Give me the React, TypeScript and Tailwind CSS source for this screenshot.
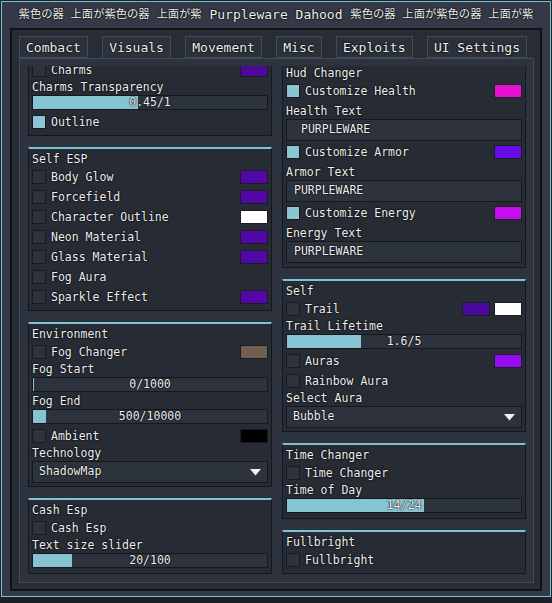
import type { ReactNode } from "react"

const tabs = ["Combact", "Visuals", "Movement", "Misc", "Exploits", "UI Settings"]

function Section({ children }: { children: ReactNode }) {
  return (
    <div className="shrink-0 border border-[#14171c] border-t-2 border-t-[#7ec3d4] bg-[#262b34] p-[3px]">
      {children}
    </div>
  )
}

function Label({ children }: { children?: ReactNode }) {
  return <div className="h-[15px] leading-[15px]">{children}</div>
}

function Toggle({ label, checked, swatches }: { label: string; checked?: boolean; swatches?: string[] }) {
  return (
    <div className="flex h-[20px] items-center">
      <div
        className={`h-[14px] w-[14px] shrink-0 border border-[#171a20] ${checked ? "bg-[#8bc5d4]" : "bg-[#2d333d]"}`}
      />
      <span className="ml-[5px] flex-1 leading-[14px]">{label}</span>
      {swatches?.map((c, i) => (
        <div key={i} className={`ml-[4px] h-[14px] w-[28px] shrink-0 border border-[#1a1d24] ${c}`} />
      ))}
    </div>
  )
}

function Slider({ text, pct }: { text: string; pct: string }) {
  return (
    <div className="relative mb-[2px] h-[15px] border border-[#15181d] bg-[#2d333d]">
      <div className="h-full bg-[#86c3d3]" style={{ width: pct }} />
      <div className="absolute inset-0 flex items-center justify-center leading-none">{text}</div>
    </div>
  )
}

function TextField({ label, indent }: { label: string; indent?: boolean }) {
  return (
    <>
      <div className="h-[18px] pt-[3px] leading-[15px]">{label}</div>
      <div
        className={`mb-px flex h-[22px] items-center border border-[#15181d] bg-[#2d333d] ${indent ? "pl-[14px]" : "pl-[7px]"}`}
      >
        PURPLEWARE
      </div>
    </>
  )
}

function Dropdown({ value }: { value: string }) {
  return (
    <div className="flex h-[22px] items-center justify-between border border-[#15181d] bg-[#2d333d] pl-[6px] pr-[6px]">
      <span>{value}</span>
      <svg width="11" height="7" viewBox="0 0 11 7">
        <path d="M0 0H11L5.5 6.5Z" fill="#f2f2f2" />
      </svg>
    </div>
  )
}

export default function App() {
  return (
    <div className="h-[603px] w-[552px] bg-[#1d2026] p-px font-['DejaVu_Sans_Mono','Noto_Sans_CJK_JP',monospace] text-[11.5px] text-[#f0f0f0] [text-shadow:0_0_1px_#000,0_0_2px_#000]">
      <div className="w-[550px] border border-[#7cc1d3] bg-[#333946] px-[8px] pb-[5px]">
        {/* title */}
        <div className="flex h-[26px] items-center justify-center whitespace-pre text-[13px]">
          <span className="text-[11.3px]">紫色の器 上面が紫色の器 上面が紫</span>
          <span> Purpleware Dahood </span>
          <span className="text-[11.3px]">紫色の器 上面が紫色の器 上面が紫</span>
        </div>

        <div className="h-[563px] border-2 border-[#101216] bg-[#272c35] pl-[7px] pr-[6px] pt-[6px]">
          {/* tabs */}
          <div className="flex h-[22px] w-[508px] justify-between whitespace-nowrap text-[13px] leading-none">
            {tabs.map((t) => (
              <div
                key={t}
                className={`flex items-center border border-[#434a58] px-[6px] pt-px ${t === "Visuals" ? "border-b-[#2d333e] bg-[#2d333e]" : "bg-[#2b313b]"}`}
              >
                {t}
              </div>
            ))}
          </div>

          {/* content panel */}
          <div className="flex h-[525px] gap-[10px] border border-[#434a58] bg-[#2d333e] pb-[8px] pl-[8px] pt-[7px]">
            {/* left column (scrolled to bottom) */}
            <div className="flex h-[508px] w-[244px] flex-col justify-end gap-[11px] overflow-hidden">
              <Section>
                <Label />
                <Toggle label="Charms" swatches={["bg-[#4c0898]"]} />
                <Label>Charms Transparency</Label>
                <Slider text="0.45/1" pct="45%" />
                <Toggle label="Outline" checked />
              </Section>

              <Section>
                <Label>Self ESP</Label>
                <Toggle label="Body Glow" swatches={["bg-[#5207a6]"]} />
                <Toggle label="Forcefield" swatches={["bg-[#5207a6]"]} />
                <Toggle label="Character Outline" swatches={["bg-white"]} />
                <Toggle label="Neon Material" swatches={["bg-[#5207a6]"]} />
                <Toggle label="Glass Material" swatches={["bg-[#5207a6]"]} />
                <Toggle label="Fog Aura" />
                <Toggle label="Sparkle Effect" swatches={["bg-[#5207a6]"]} />
              </Section>

              <Section>
                <Label>Environment</Label>
                <Toggle label="Fog Changer" swatches={["bg-[#6e5f50]"]} />
                <Label>Fog Start</Label>
                <Slider text="0/1000" pct="1px" />
                <Label>Fog End</Label>
                <Slider text="500/10000" pct="5.5%" />
                <Toggle label="Ambient" swatches={["bg-black"]} />
                <Label>Technology</Label>
                <Dropdown value="ShadowMap" />
              </Section>

              <Section>
                <Label>Cash Esp</Label>
                <Toggle label="Cash Esp" />
                <Label>Text size slider</Label>
                <Slider text="20/100" pct="16.5%" />
              </Section>
            </div>

            {/* right column */}
            <div className="flex h-[508px] w-[244px] flex-col justify-end gap-[11px] overflow-hidden">
              <Section>
                <Label>Hud Changer</Label>
                <Toggle label="Customize Health" checked swatches={["bg-[#e70fd0]"]} />
                <TextField label="Health Text" indent />
                <Toggle label="Customize Armor" checked swatches={["bg-[#650ce6]"]} />
                <TextField label="Armor Text" />
                <Toggle label="Customize Energy" checked swatches={["bg-[#c40df0]"]} />
                <TextField label="Energy Text" />
              </Section>

              <Section>
                <Label>Self</Label>
                <Toggle label="Trail" swatches={["bg-[#4a089c]", "bg-white"]} />
                <Label>Trail Lifetime</Label>
                <Slider text="1.6/5" pct="31.5%" />
                <Toggle label="Auras" swatches={["bg-[#960cf0]"]} />
                <Toggle label="Rainbow Aura" />
                <Label>Select Aura</Label>
                <Dropdown value="Bubble" />
              </Section>

              <Section>
                <Label>Time Changer</Label>
                <Toggle label="Time Changer" />
                <Label>Time of Day</Label>
                <Slider text="14/24" pct="58.5%" />
              </Section>

              <Section>
                <Label>Fullbright</Label>
                <Toggle label="Fullbright" />
              </Section>
            </div>
          </div>
        </div>
      </div>
    </div>
  )
}
